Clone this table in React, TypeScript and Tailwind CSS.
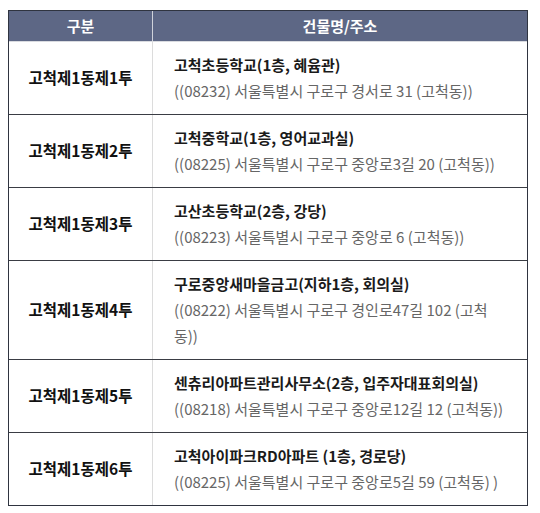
import React from "react";

const rows = [
  { id: "고척제1동제1투", name: "고척초등학교(1층, 혜윰관)", addr: ["((08232) 서울특별시 구로구 경서로 31 (고척동))"] },
  { id: "고척제1동제2투", name: "고척중학교(1층, 영어교과실)", addr: ["((08225) 서울특별시 구로구 중앙로3길 20 (고척동))"] },
  { id: "고척제1동제3투", name: "고산초등학교(2층, 강당)", addr: ["((08223) 서울특별시 구로구 중앙로 6 (고척동))"] },
  { id: "고척제1동제4투", name: "구로중앙새마을금고(지하1층, 회의실)", addr: ["((08222) 서울특별시 구로구 경인로47길 102 (고척", "동))"] },
  { id: "고척제1동제5투", name: "센츄리아파트관리사무소(2층, 입주자대표회의실)", addr: ["((08218) 서울특별시 구로구 중앙로12길 12 (고척동))"] },
  { id: "고척제1동제6투", name: "고척아이파크RD아파트 (1층, 경로당)", addr: ["((08225) 서울특별시 구로구 중앙로5길 59 (고척동) )"] },
];

export default function App() {
  return (
    <div
      className="w-[540px] h-[513px] bg-white pl-2 pt-[10px]"
      style={{ fontFamily: '"Noto Sans CJK KR", "Noto Sans", sans-serif' }}
    >
      <div className="w-[520px] border border-[#2f3440]">
        <div className="flex h-[31px] bg-[#5d6785] text-white font-bold text-[15px] border-b border-[#d9dbe0]">
          <div className="w-[144px] flex items-center justify-center border-r border-[#cfd2da]">구분</div>
          <div className="flex-1 flex items-center justify-center">건물명/주소</div>
        </div>
        {rows.map((r, i) => (
          <div key={r.id} className={`flex ${i > 0 ? "border-t border-[#3a3d44]" : ""}`}>
            <div className="w-[144px] flex items-center justify-center border-r border-[#dcdcdc] font-bold text-[15.5px] text-[#111] whitespace-nowrap">
              {r.id}
            </div>
            <div className="flex-1 pl-[21px] pr-2 py-[10px] text-[15px] leading-[26px] whitespace-nowrap">
              <div className="font-bold text-[#1a1a1a]">{r.name}</div>
              {r.addr.map((a) => (
                <div key={a} className="text-[#666]">{a}</div>
              ))}
            </div>
          </div>
        ))}
      </div>
    </div>
  );
}
